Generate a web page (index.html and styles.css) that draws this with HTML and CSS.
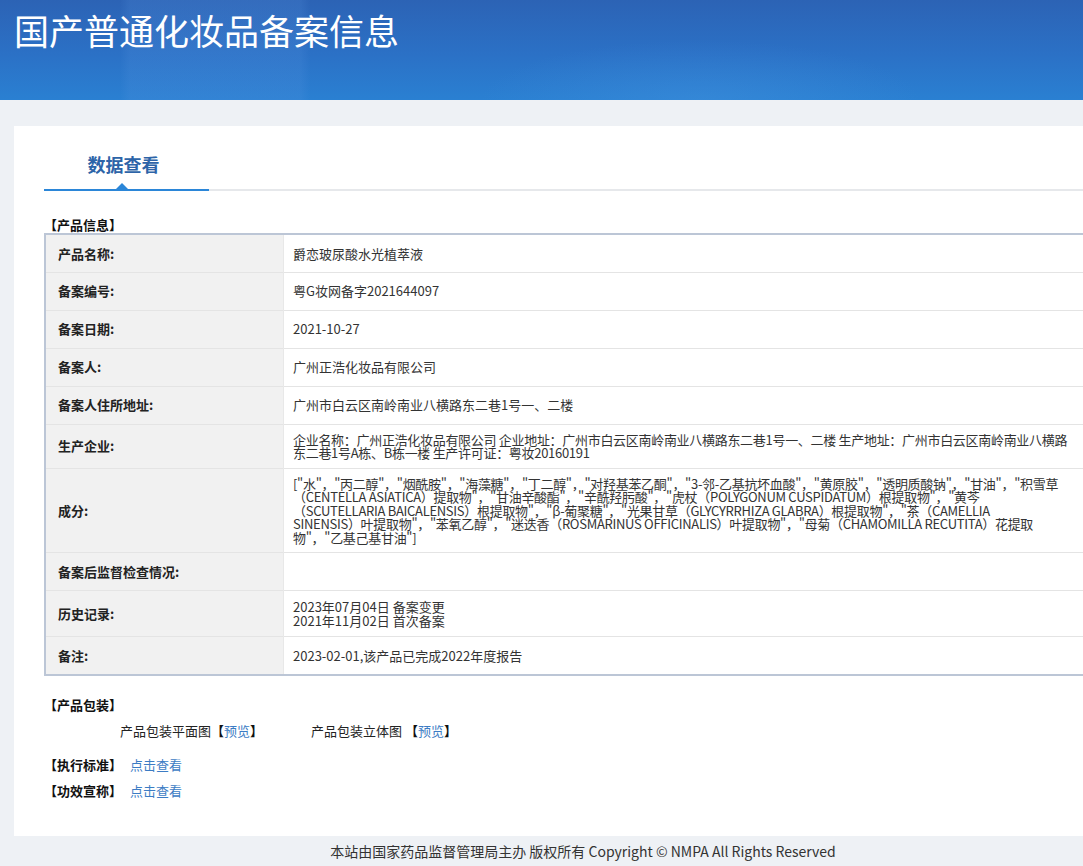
FILE: index.html
```html
<!DOCTYPE html>
<html lang="zh-CN">
<head>
    <meta charset="UTF-8">
    <meta name="viewport" content="width=device-width, initial-scale=1.0">
    <title>国产普通化妆品备案信息</title>
    <link rel="stylesheet" href="styles.css">
</head>
<body>

<div class="page">
    <!-- Top banner -->
    <div class="banner">
        <h1>国产普通化妆品备案信息</h1>
    </div>

    <div class="main">
        <div class="card">
            <!-- Tab bar -->
            <div class="tabs">
                <div class="tab active">数据查看</div>
            </div>

            <div class="section-title">【产品信息】</div>
            <table class="info">
                <tr>
                    <td class="label">产品名称:</td>
                    <td>爵恋玻尿酸水光植萃液</td>
                </tr>
                <tr>
                    <td class="label">备案编号:</td>
                    <td>粤G妆网备字2021644097</td>
                </tr>
                <tr>
                    <td class="label">备案日期:</td>
                    <td>2021-10-27</td>
                </tr>
                <tr>
                    <td class="label">备案人:</td>
                    <td>广州正浩化妆品有限公司</td>
                </tr>
                <tr>
                    <td class="label">备案人住所地址:</td>
                    <td>广州市白云区南岭南业八横路东二巷1号一、二楼</td>
                </tr>
                <tr>
                    <td class="label">生产企业:</td>
                    <td class="long">企业名称：广州正浩化妆品有限公司 企业地址：广州市白云区南岭南业八横路东二巷1号一、二楼 生产地址：广州市白云区南岭南业八横路<br>东二巷1号A栋、B栋一楼 生产许可证：粤妆20160191</td>
                </tr>
                <tr>
                    <td class="label">成分:</td>
                    <td class="long">["水"，"丙二醇"，"烟酰胺"，"海藻糖"，"丁二醇"，"对羟基苯乙酮"，"3-邻-乙基抗坏血酸"，"黄原胶"，"透明质酸钠"，"甘油"，"积雪草<br>（CENTELLA ASIATICA）提取物"，"甘油辛酸酯"，"辛酰羟肟酸"，"虎杖（POLYGONUM CUSPIDATUM）根提取物"，"黄芩<br>（SCUTELLARIA BAICALENSIS）根提取物"，"β-葡聚糖"，"光果甘草（GLYCYRRHIZA GLABRA）根提取物"，"茶（CAMELLIA<br>SINENSIS）叶提取物"，"苯氧乙醇"，"迷迭香（ROSMARINUS OFFICINALIS）叶提取物"，"母菊（CHAMOMILLA RECUTITA）花提取<br>物"，"乙基己基甘油"]</td>
                </tr>
                <tr>
                    <td class="label">备案后监督检查情况:</td>
                    <td></td>
                </tr>
                <tr class="history">
                    <td class="label">历史记录:</td>
                    <td>2023年07月04日 备案变更<br>2021年11月02日 首次备案</td>
                </tr>
                <tr>
                    <td class="label">备注:</td>
                    <td>2023-02-01,该产品已完成2022年度报告</td>
                </tr>
            </table>

            <div class="section-title pack-title">【产品包装】</div>
            <div class="pack-row">
                <span class="pack-item">产品包装平面图<b>【</b><a href="#">预览</a><b>】</b></span>
                <span class="pack-item">产品包装立体图 <b>【</b><a href="#">预览</a><b>】</b></span>
            </div>

            <div class="section-title line-item first">【执行标准】<a href="#">点击查看</a></div>
            <div class="section-title line-item">【功效宣称】<a href="#">点击查看</a></div>
        </div>
    </div>

    <div class="footer">本站由国家药品监督管理局主办 版权所有 Copyright © NMPA All Rights Reserved</div>
</div>

</body>
</html>
```

FILE: styles.css
```css
html, body {
    margin: 0;
    padding: 0;
    overflow-x: hidden;
}
body {
    font-family: "Noto Sans CJK SC", "Microsoft YaHei", sans-serif;
    font-size: 13px;
    color: #333;
    background: #eef1f5;
}
.page {
    width: 1166px;
}
.banner {
    height: 100px;
    box-sizing: border-box;
    padding: 6px 0 0 14px;
    background:
        radial-gradient(ellipse 220px 60px at 700px 100px, rgba(70, 150, 225, 0.35), transparent),
        linear-gradient(90deg, rgba(90, 150, 225, 0.0) 120px, rgba(90, 150, 225, 0.18) 130px, rgba(90, 150, 225, 0.18) 300px, rgba(90, 150, 225, 0) 310px),
        linear-gradient(180deg, #2c63b5 0%, #2b71c6 55%, #2a80d2 100%);
}
.banner h1 {
    margin: 0;
    font-size: 35px;
    font-weight: normal;
    line-height: 48px;
    color: #fff;
}
.main {
    padding: 26px 0 0 14px;
}
.card {
    background: #fff;
    height: 710px;
    box-sizing: border-box;
    padding: 26px 30px 0 30px;
}
.tabs {
    display: flex;
    border-bottom: 2px solid #e6e8eb;
}
.tab {
    position: relative;
    width: 159px;
    padding-right: 6px;
    text-align: center;
    font-size: 18px;
    font-weight: bold;
    line-height: 24px;
    color: #2d64a8;
    padding-bottom: 13px;
    margin-bottom: -2px;
    border-bottom: 2px solid #2b86d8;
}
.tab::after {
    content: "";
    position: absolute;
    left: 72px;
    bottom: 0;
    border-left: 6px solid transparent;
    border-right: 6px solid transparent;
    border-bottom: 6px solid #2b86d8;
}
.section-title {
    font-weight: bold;
    color: #111;
    line-height: 16px;
    margin-top: 26px;
}
.info {
    width: 1042px;
    border-collapse: collapse;
    border: 2px solid #bcc6d6;
    table-layout: fixed;
}
.info tr {
    height: 38px;
}
.info td {
    border-top: 1px solid #e4e4e4;
    padding: 8px 10px 8px 9px;
    line-height: 13.5px;
    vertical-align: middle;
    color: #333;
}
.info td.long {
    letter-spacing: -0.3px;
    white-space: nowrap;
}
.info td.label {
    width: 215px;
    padding-left: 12px;
    background: #f1f1f1;
    border-right: 1px solid #e8e8e8;
    font-weight: bold;
    color: #222;
    letter-spacing: 0;
}
.info tr.history td {
    padding-top: 9px;
    padding-bottom: 9px;
}
.pack-title {
    margin-top: 21px;
}
.pack-row {
    display: flex;
    gap: 48px;
    padding-left: 76px;
    margin-top: 10px;
    line-height: 16px;
    color: #222;
}
.pack-row b {
    color: #111;
}
a {
    color: #3c7cc4;
    text-decoration: none;
    font-weight: normal;
}
.line-item {
    margin-top: 10px;
}
.line-item.first {
    margin-top: 18px;
}
.line-item a {
    margin-left: 8px;
}
.footer {
    height: 30px;
    line-height: 30px;
    text-align: center;
    font-size: 14px;
    color: #333;
    background: #eef1f5;
}
```
